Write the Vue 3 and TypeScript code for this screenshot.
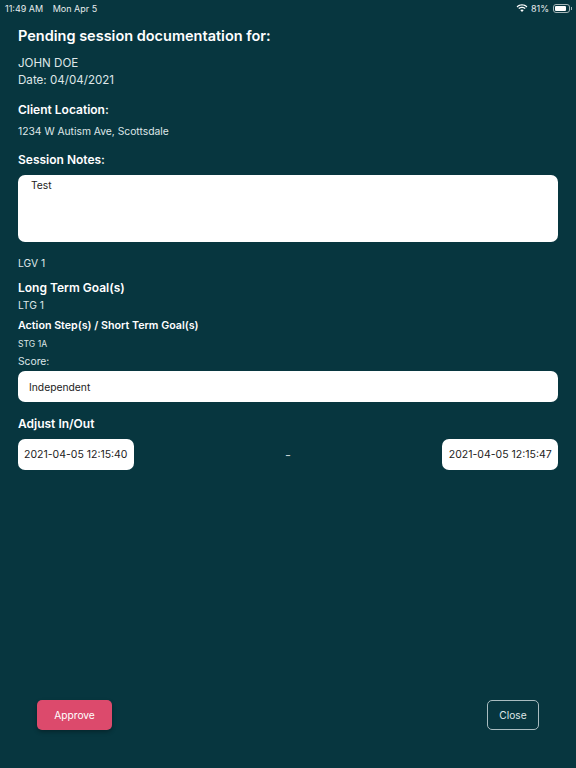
<script setup lang="ts">
const timeIn = '2021-04-05 12:15:40'
const timeOut = '2021-04-05 12:15:47'
</script>

<template>
  <div class="screen">
    <div class="status">
      <div class="status-left"><span>11:49 AM</span><span>Mon Apr 5</span></div>
      <div class="status-right">
        <svg width="12" height="9" viewBox="0 0 12 9" fill="#fff">
          <path d="M6 1.6c1.7 0 3.3.65 4.5 1.8l.9-1C9.95 1 8.05.2 6 .2S2.05 1 .6 2.4l.9 1C2.7 2.25 4.3 1.6 6 1.6z" />
          <path d="M6 4c1.05 0 2 .4 2.8 1.1l.9-1C8.7 3.2 7.4 2.65 6 2.65S3.3 3.2 2.3 4.1l.9 1C4 4.4 4.95 4 6 4z" />
          <path d="M6 5.4c-.7 0-1.3.25-1.8.7L6 8.1l1.8-2c-.5-.45-1.1-.7-1.8-.7z" />
        </svg>
        <span>81%</span>
        <div class="battery"><div class="battery-fill"></div></div>
        <div class="battery-cap"></div>
      </div>
    </div>

    <main class="content">
      <h1 class="title">Pending session documentation for:</h1>
      <p class="client">JOHN DOE</p>
      <p class="date">Date: 04/04/2021</p>

      <h2 class="label location-label">Client Location:</h2>
      <p class="address">1234 W Autism Ave, Scottsdale</p>

      <h2 class="label notes-label">Session Notes:</h2>
      <div class="notes">Test</div>

      <p class="lgv">LGV 1</p>
      <h2 class="label ltg-label">Long Term Goal(s)</h2>
      <p class="ltg">LTG 1</p>
      <h3 class="action">Action Step(s) / Short Term Goal(s)</h3>
      <p class="stg">STG 1A</p>
      <p class="score-label">Score:</p>
      <div class="score">Independent</div>

      <h2 class="label adjust-label">Adjust In/Out</h2>
      <div class="times">
        <div class="time">{{ timeIn }}</div>
        <span class="dash">-</span>
        <div class="time">{{ timeOut }}</div>
      </div>
    </main>

    <footer class="footer">
      <button class="approve" type="button">Approve</button>
      <button class="close" type="button">Close</button>
    </footer>
  </div>
</template>

<style>
html, body { margin: 0; background: #07363f; }
</style>

<style scoped>
* { box-sizing: border-box; }
.screen {
  width: 576px;
  height: 768px;
  display: flex;
  flex-direction: column;
  overflow: hidden;
  background: #07363f;
  color: #dfe6e8;
  font-family: Inter, "Liberation Sans", sans-serif;
}
h1, h2, h3, p { margin: 0; }
.status {
  height: 16px;
  padding: 1px 4px 0 5px;
  display: flex;
  align-items: center;
  justify-content: space-between;
  font-size: 9px;
  line-height: 15px;
  color: #e6eced;
}
.status-left { display: flex; gap: 9.5px; }
.status-right { display: flex; align-items: center; gap: 3px; }
.battery {
  width: 17px;
  height: 9px;
  border: 1px solid #a4b5b8;
  border-radius: 3px;
  padding: 1px;
  margin-left: 1px;
}
.battery-fill { width: 82%; height: 100%; background: #fff; border-radius: 1px; }
.battery-cap { width: 1px; height: 3px; margin-left: -2px; background: #a4b5b8; }
.content { padding: 0 18px; display: flex; flex-direction: column; }
.title { margin-top: 10px; font-size: 14.5px; line-height: 20px; font-weight: 600; color: #fff; }
.client { margin-top: 9px; font-size: 11.6px; line-height: 17px; }
.date { font-size: 11.6px; line-height: 17px; }
.label { font-size: 12px; line-height: 16px; font-weight: 600; color: #fff; }
.location-label { margin-top: 13px; }
.address { margin-top: 6px; font-size: 10.3px; line-height: 14px; }
.notes-label { margin-top: 14px; }
.notes {
  margin-top: 7px;
  height: 67px;
  padding: 3px 13px;
  background: #fff;
  border-radius: 7px;
  color: #222;
  font-size: 10.3px;
  line-height: 14px;
}
.lgv { margin-top: 14px; font-size: 10.3px; line-height: 14px; }
.ltg-label { margin-top: 10px; }
.ltg { margin-top: 2px; font-size: 10.3px; line-height: 14px; }
.action { margin-top: 7px; font-size: 10.7px; line-height: 14px; font-weight: 600; color: #fff; }
.stg { margin-top: 5px; font-size: 8.6px; line-height: 12px; }
.score-label { margin-top: 4px; font-size: 10.3px; line-height: 14px; }
.score {
  margin-top: 3px;
  height: 31px;
  padding: 0 11px;
  display: flex;
  align-items: center;
  background: #fff;
  border-radius: 7px;
  color: #222;
  font-size: 10.3px;
}
.adjust-label { margin-top: 14px; }
.times { margin-top: 7px; display: flex; align-items: center; justify-content: space-between; }
.time {
  width: 115.5px;
  height: 31px;
  display: flex;
  align-items: center;
  justify-content: center;
  background: #fff;
  border-radius: 7px;
  color: #222;
  font-size: 10.5px;
}
.dash { font-size: 13px; color: #c4d0d3; }
.footer {
  margin-top: auto;
  padding: 0 37px 38px;
  display: flex;
  justify-content: space-between;
}
button { font-family: inherit; font-size: 10.2px; height: 30px; border-radius: 5px; padding: 0; }
.approve {
  width: 75px;
  border: 0;
  background: #dc4a6c;
  color: #fff;
  box-shadow: 0 2px 4px rgba(0, 0, 0, 0.3);
}
.close {
  width: 52px;
  background: transparent;
  border: 1px solid #a9bcc0;
  color: #dfe6e8;
}
</style>
